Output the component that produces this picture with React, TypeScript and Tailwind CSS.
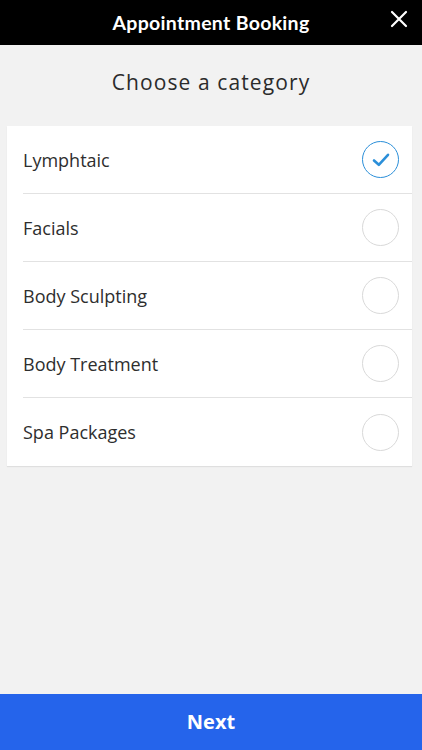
import React from 'react'

const categories = ['Lymphtaic', 'Facials', 'Body Sculpting', 'Body Treatment', 'Spa Packages']

const App = () => {
  const selected = 0
  return (
    <div className="flex flex-col h-[750px] w-full bg-[#f2f2f2] font-['Open_Sans',sans-serif]">
      <header className="relative h-[45px] bg-black flex items-center justify-center shrink-0">
        <h1 className="text-white text-[19.5px] font-bold tracking-[0.3px] font-['Lato',sans-serif]">Appointment Booking</h1>
        <button className="absolute right-[14px] top-[10px] text-white">
          <svg width="18" height="18" viewBox="0 0 18 18" fill="none" stroke="currentColor" strokeWidth="2.2" strokeLinecap="round">
            <path d="M2 2 L16 16 M16 2 L2 16" />
          </svg>
        </button>
      </header>

      <div className="h-[81px] flex items-center justify-center shrink-0">
        <h2 className="text-[21px] text-[#2b2b2b] tracking-[1.1px] pb-[6px]">Choose a category</h2>
      </div>

      <ul className="mx-[7px] mr-[10px] bg-white shadow-[0_1px_1px_rgba(0,0,0,0.08)]">
        {categories.map((c, i) => (
          <li key={c} className="pl-4">
            <div className={`h-[68px] flex items-center justify-between pr-[13px] ${i < categories.length - 1 ? 'border-b border-[#e2e2e2]' : ''}`}>
              <span className="text-[18px] text-[#2e2e2e] pt-[1px]">{c}</span>
              {i === selected ? (
                <span className="w-[37px] h-[37px] rounded-full border-[1.5px] border-[#2b8fd9] flex items-center justify-center">
                  <svg width="22" height="22" viewBox="0 0 22 22" fill="none" stroke="#2b8fd9" strokeWidth="2.6" strokeLinecap="round" strokeLinejoin="round">
                    <path d="M4 11.5 L8.8 15.8 L18 5.8" />
                  </svg>
                </span>
              ) : (
                <span className="w-[37px] h-[37px] rounded-full border border-[#d9d9d9]" />
              )}
            </div>
          </li>
        ))}
      </ul>

      <div className="flex-1" />

      <button className="h-[56px] shrink-0 bg-[#2564eb] text-white text-[20px] font-bold">Next</button>
    </div>
  )
}

export default App
